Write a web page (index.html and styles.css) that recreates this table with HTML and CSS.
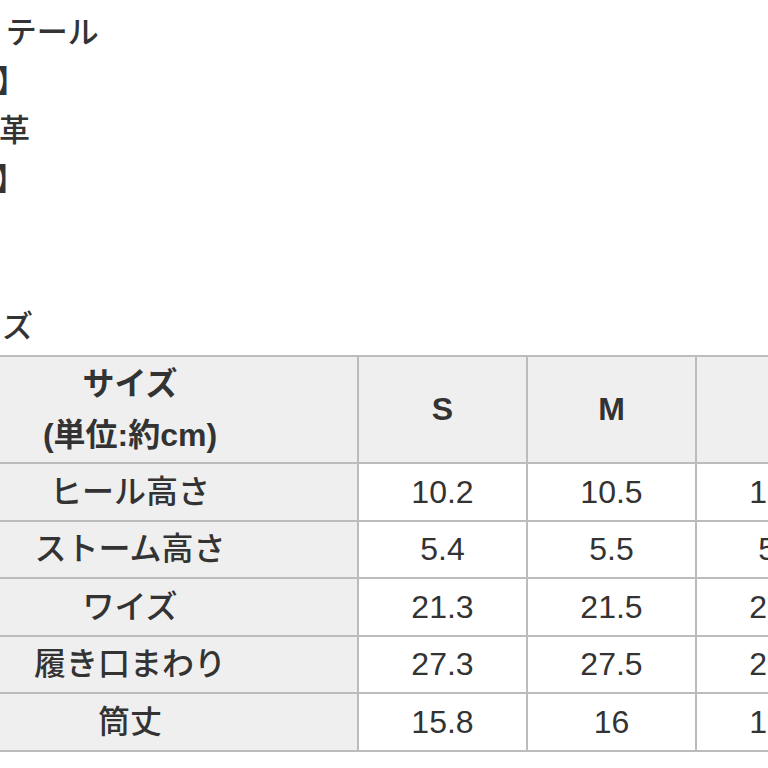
FILE: index.html
```html
<!DOCTYPE html>
<html lang="ja">
<head>
<meta charset="utf-8">
<title>サイズ</title>
<link rel="stylesheet" href="styles.css">
</head>
<body>
<div class="page">
  <div class="notes">
    <div class="line l1">ディテール</div>
    <div class="line l2">【素材】</div>
    <div class="line l3">合成皮革</div>
    <div class="line l4">【サイズ】</div>
    <div class="line"></div>
    <div class="line"></div>
    <div class="line l7">サイズ</div>
  </div>
  <table class="size-table">
    <thead>
      <tr>
        <th class="label">サイズ<br>(単位:約cm)</th>
        <th>S</th>
        <th>M</th>
        <th>L</th>
      </tr>
    </thead>
    <tbody>
      <tr><th class="label">ヒール高さ</th><td>10.2</td><td>10.5</td><td>10.8</td></tr>
      <tr><th class="label">ストーム高さ</th><td>5.4</td><td>5.5</td><td>5.6</td></tr>
      <tr><th class="label">ワイズ</th><td>21.3</td><td>21.5</td><td>21.7</td></tr>
      <tr><th class="label">履き口まわり</th><td>27.3</td><td>27.5</td><td>27.7</td></tr>
      <tr><th class="label">筒丈</th><td>15.8</td><td>16</td><td>16.2</td></tr>
    </tbody>
  </table>
</div>
</body>
</html>
```

FILE: styles.css
```css
html, body {
  margin: 0;
  padding: 0;
  background: #ffffff;
  overflow: hidden;
}

body {
  font-family: "Liberation Sans", "Noto Sans CJK JP", sans-serif;
  color: #333333;
}

.page {
  padding-top: 8px;
}

.notes {
  font-size: 31px;
  line-height: 49px;
  white-space: nowrap;
  font-weight: 500;
}

.line {
  height: 49px;
}

.l1 { text-indent: -54px; }
.l2 { text-indent: -97px; }
.l3 { text-indent: -94px; }
.l4 { text-indent: -128px; }
.l7 { text-indent: -59px; }

.size-table {
  margin-top: 4px;
  margin-left: -99px;
  border-collapse: collapse;
  table-layout: fixed;
  width: 964px;
  font-size: 32px;
}

.size-table th,
.size-table td {
  border: 2px solid #bcbcbc;
  text-align: center;
  vertical-align: middle;
  padding: 0;
  height: 55.5px;
  line-height: 40px;
  width: 167px;
}

.size-table th.label {
  width: 454px;
}

.size-table thead th {
  background: #efefef;
  font-weight: bold;
  height: 105px;
  line-height: 51px;
}

.size-table tbody th {
  background: #efefef;
  font-weight: 500;
}

.size-table td {
  background: #ffffff;
  font-weight: normal;
}
```
